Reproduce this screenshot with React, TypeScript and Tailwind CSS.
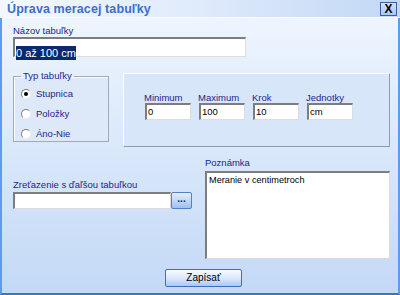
import React from 'react';

const labelCls = "text-[9.5px] leading-[12px] text-[#22248f]";
const sunken =
  "border-t-2 border-l-2 border-b border-r border-t-[#7d7d7d] border-l-[#7d7d7d] border-b-[#dcdcdc] border-r-[#dcdcdc] bg-white";

function Radio({ label, checked }: { label: string; checked?: boolean }) {
  return (
    <div className="flex items-center h-[20px]">
      <span className="ml-[7px] w-[10px] h-[10px] rounded-full bg-white border border-t-[#808080] border-l-[#808080] border-b-[#ececec] border-r-[#ececec] flex items-center justify-center">
        {checked && <span className="w-[4px] h-[4px] rounded-full bg-black" />}
      </span>
      <span className={`${labelCls} ml-[5px]`}>{label}</span>
    </div>
  );
}

function SmallField({ label, value }: { label: string; value: string }) {
  return (
    <div className="flex flex-col w-[46px]">
      <span className={`${labelCls} -ml-[1px]`}>{label}</span>
      <div className={`${sunken} h-[17px] mt-[-1px] pl-[1px] text-[9.5px] leading-[13px] text-black`}>{value}</div>
    </div>
  );
}

export default function App() {
  return (
    <div className="w-[400px] h-[295px] flex flex-col bg-[#edf4fd] font-['Liberation_Sans',Arial,sans-serif] overflow-hidden">
      {/* title bar */}
      <div className="h-[18px] flex items-center justify-between pl-[7px] pr-[3px] bg-linear-to-r from-[#f4f8fe] via-[#dfeafb] to-[#c2d8f5] border-b border-[#f8fbff]">
        <span className="text-[12.5px] font-bold leading-[16px] text-[#3b6fc8] tracking-[0.1px]">Úprava meracej tabuľky</span>
        <div className="w-[17px] h-[14px] border border-[#3d5e96] bg-linear-to-b from-[#d4e5fb] to-[#a6c7f0] flex items-center justify-center text-[12px] font-bold leading-none text-black">
          X
        </div>
      </div>

      {/* body */}
      <div className="flex-1 flex flex-col border-l-2 border-r-2 border-b-2 border-l-[#5b9cf0] border-r-[#5b9cf0] border-b-[#3f72c8] bg-linear-to-b from-[#eef5fe] to-[#c3d9f6] pl-[11px] pr-[8px] pt-[7px]">
        <span className={labelCls}>Názov tabuľky</span>
        <div className={`${sunken} w-[233px] h-[20px] pl-[1px] pt-[1px]`}>
          <span className="bg-[#0b2a6e] text-white text-[11px] leading-[14px] inline-block">0 až 100 cm</span>
        </div>

        <div className="flex mt-[16px]">
          <fieldset className="w-[96px] h-[72px] mt-[-3px] border border-[#a2aab8] bg-[#dde9f9] shadow-[inset_1px_1px_0_#fbfdff]">
            <legend className={`${labelCls} ml-[7px] px-[2px]`}>Typ tabuľky</legend>
            <div className="flex flex-col mt-[2px]">
              <Radio label="Stupnica" checked />
              <Radio label="Položky" />
              <Radio label="Áno-Nie" />
            </div>
          </fieldset>
          <div className="ml-[14px] w-[267px] h-[74px] border border-t-white border-l-white border-b-[#8e9bb0] border-r-[#8e9bb0] bg-[#d8e6f9] pl-[21px] pt-[18px] flex gap-[8px]">
            <SmallField label="Minimum" value="0" />
            <SmallField label="Maximum" value="100" />
            <SmallField label="Krok" value="10" />
            <SmallField label="Jednotky" value="cm" />
          </div>
        </div>

        <div className="flex mt-[10px]">
          <div className="w-[179px] flex flex-col pt-[22px]">
            <span className={labelCls}>Zreťazenie s ďaľšou tabuľkou</span>
            <div className="flex mt-[1px]">
              <div className={`${sunken} w-[158px] h-[17px]`} />
              <div className="w-[21px] h-[17px] border border-[#4f80c8] rounded-[2px] bg-linear-to-b from-[#e4effd] to-[#9ec2ef] flex items-center justify-center text-[10px] font-bold leading-none text-[#1c2a6a] pb-[3px]">
                ...
              </div>
            </div>
          </div>
          <div className="ml-[13px] flex flex-col">
            <span className={labelCls}>Poznámka</span>
            <div className={`${sunken} w-[185px] h-[88px] mt-[2px] pl-[2px] pt-[1px] text-[9.2px] leading-[12px] text-black`}>
              Meranie v centimetroch
            </div>
          </div>
        </div>

        <div className="flex mt-[10px] pl-[152px]">
          <div className="w-[77px] h-[18px] border border-[#3c6ec2] rounded-[2px] bg-linear-to-b from-[#f6faff] via-[#dbe9fc] to-[#a9c9f1] flex items-center justify-center text-[10px] leading-none text-black">
            Zapísať
          </div>
        </div>
      </div>
    </div>
  );
}
